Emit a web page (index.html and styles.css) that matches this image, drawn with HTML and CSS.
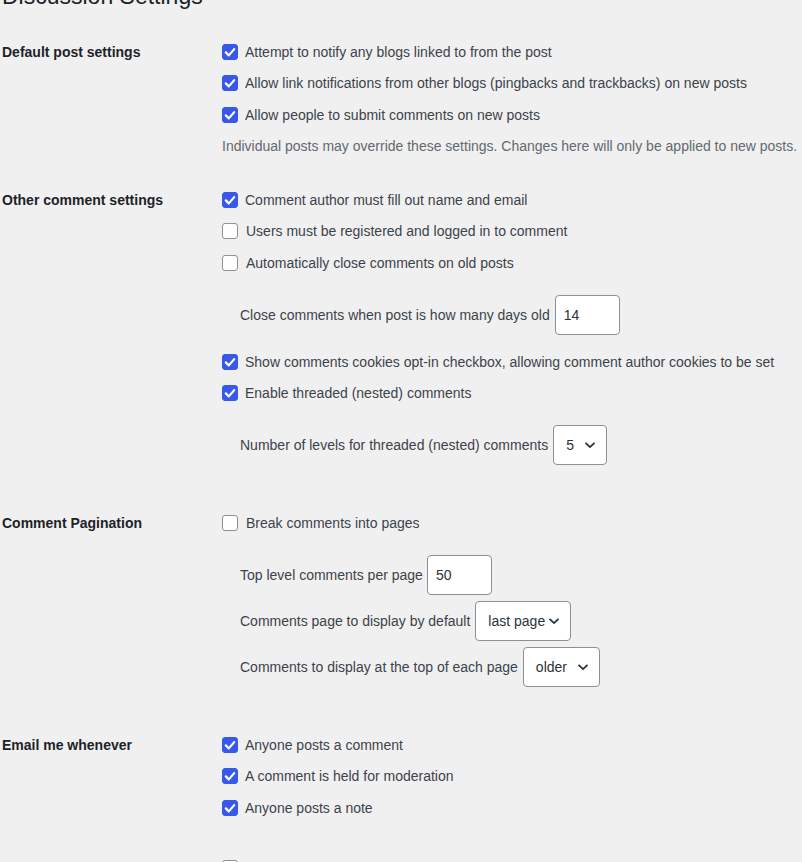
FILE: index.html
```html
<!DOCTYPE html>
<html lang="en">
<head>
    <meta charset="UTF-8" />
    <title>Discussion Settings</title>
    <link rel="stylesheet" href="styles.css">
</head>
<body>
<div class="wrap">
    <h1>Discussion Settings</h1>

    <div class="section s1">
        <div class="th">Default post settings</div>
        <div class="td">
            <label class="opt"><span class="box on"><svg viewBox="0 0 16 16"><path d="M3.8 8.4l3 3 5.4-6.3"/></svg></span>Attempt to notify any blogs linked to from the post</label>
            <label class="opt"><span class="box on"><svg viewBox="0 0 16 16"><path d="M3.8 8.4l3 3 5.4-6.3"/></svg></span>Allow link notifications from other blogs (pingbacks and trackbacks) on new posts</label>
            <label class="opt"><span class="box on"><svg viewBox="0 0 16 16"><path d="M3.8 8.4l3 3 5.4-6.3"/></svg></span>Allow people to submit comments on new posts</label>
            <p class="opt desc">Individual posts may override these settings. Changes here will only be applied to new posts.</p>
        </div>
    </div>

    <div class="section s2">
        <div class="th">Other comment settings</div>
        <div class="td">
            <label class="opt"><span class="box on"><svg viewBox="0 0 16 16"><path d="M3.8 8.4l3 3 5.4-6.3"/></svg></span>Comment author must fill out name and email</label>
            <label class="opt"><span class="box"></span>Users must be registered and logged in to comment</label>
            <label class="opt"><span class="box"></span>Automatically close comments on old posts</label>
            <div class="sub">Close comments when post is how many days old <span class="field num w64">14</span></div>
            <label class="opt"><span class="box on"><svg viewBox="0 0 16 16"><path d="M3.8 8.4l3 3 5.4-6.3"/></svg></span>Show comments cookies opt-in checkbox, allowing comment author cookies to be set</label>
            <label class="opt"><span class="box on"><svg viewBox="0 0 16 16"><path d="M3.8 8.4l3 3 5.4-6.3"/></svg></span>Enable threaded (nested) comments</label>
            <div class="sub">Number of levels for threaded (nested) comments <span class="field sel w53">5<svg class="chev" viewBox="0 0 12 8"><path d="M1.5 1.8l4.5 4.3 4.5-4.3"/></svg></span></div>
        </div>
    </div>

    <div class="section s3">
        <div class="th">Comment Pagination</div>
        <div class="td">
            <label class="opt"><span class="box"></span>Break comments into pages</label>
            <div class="sub">Top level comments per page <span class="field num w65">50</span></div>
            <div class="sub">Comments page to display by default <span class="field sel w95">last page<svg class="chev" viewBox="0 0 12 8"><path d="M1.5 1.8l4.5 4.3 4.5-4.3"/></svg></span></div>
            <div class="sub">Comments to display at the top of each page <span class="field sel w76">older<svg class="chev" viewBox="0 0 12 8"><path d="M1.5 1.8l4.5 4.3 4.5-4.3"/></svg></span></div>
        </div>
    </div>

    <div class="section s4">
        <div class="th">Email me whenever</div>
        <div class="td">
            <label class="opt"><span class="box on"><svg viewBox="0 0 16 16"><path d="M3.8 8.4l3 3 5.4-6.3"/></svg></span>Anyone posts a comment</label>
            <label class="opt"><span class="box on"><svg viewBox="0 0 16 16"><path d="M3.8 8.4l3 3 5.4-6.3"/></svg></span>A comment is held for moderation</label>
            <label class="opt"><span class="box on"><svg viewBox="0 0 16 16"><path d="M3.8 8.4l3 3 5.4-6.3"/></svg></span>Anyone posts a note</label>
        </div>
    </div>

    <div class="section s5">
        <div class="th"></div>
        <div class="td">
            <span class="opt"><span class="box"></span></span>
        </div>
    </div>
</div>
</body>
</html>
```

FILE: styles.css
```css
html, body {
    margin: 0;
    padding: 0;
}
body {
    background: #f0f0f1;
    color: #3c434a;
    font-family: "Liberation Sans", Arial, sans-serif;
    font-size: 14px;
    overflow: hidden;
}
.wrap {
    margin-top: -19px;
    padding-left: 2px;
}
h1 {
    margin: 0;
    font-size: 23px;
    font-weight: 400;
    line-height: 30px;
    color: #1d2327;
}

.section {
    display: grid;
    grid-template-columns: 220px 1fr;
}
.s1 { margin-top: 30.5px; }
.s2 { margin-top: 33.5px; }
.s3 { margin-top: 47.5px; }
.s4 { margin-top: 48px; }
.s5 { margin-top: 40px; }

.th {
    font-weight: 600;
    color: #1d2327;
    line-height: 20px;
}
.td {
    display: flex;
    flex-direction: column;
    align-items: flex-start;
}

.opt {
    display: flex;
    align-items: center;
    height: 20px;
    line-height: 20px;
    margin: 0 0 11.5px;
    white-space: nowrap;
}
.opt:last-child {
    margin-bottom: 0;
}
.desc {
    color: #646970;
}

.box {
    width: 14px;
    height: 14px;
    border: 1px solid #8c8f94;
    border-radius: 3px;
    background: #fff;
    margin-right: 8px;
    flex-shrink: 0;
}
.box.on {
    background: #3858e9;
    border-color: #3858e9;
    margin-right: 7px;
}
.box svg {
    display: block;
    width: 16px;
    height: 16px;
    margin: -1px;
}
.box svg path {
    fill: none;
    stroke: #fff;
    stroke-width: 2.2;
    stroke-linecap: round;
    stroke-linejoin: round;
}

.sub {
    display: flex;
    align-items: center;
    height: 40px;
    padding-left: 18px;
    margin: 10.5px 0 6px;
    white-space: nowrap;
}
.sub + .sub {
    margin-top: 0;
}
.sub + .opt {
    margin-top: 11px;
}
.sub:last-child {
    margin-bottom: 0;
}

.field {
    display: flex;
    align-items: center;
    box-sizing: border-box;
    height: 40px;
    margin-left: 5px;
    border: 1px solid #8c8f94;
    border-radius: 4px;
    background: #fff;
    color: #2c3338;
    font-size: 14px;
}
.num {
    padding-left: 8px;
}
.sel {
    padding: 0 10px 0 12px;
}
.chev {
    width: 12px;
    height: 8px;
    margin-left: auto;
}
.chev path {
    fill: none;
    stroke: #2c3338;
    stroke-width: 1.8;
}
.w64 { width: 65px; }
.w65 { width: 65px; margin-left: 4px; }
.w53 { width: 54px; }
.w95 { width: 96px; }
.w76 { width: 77px; }
```
